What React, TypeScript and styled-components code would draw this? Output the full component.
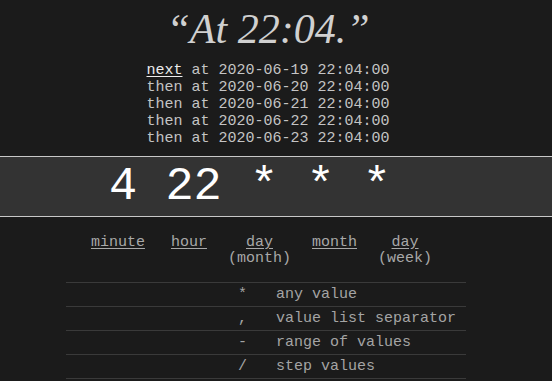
import * as React from 'react'
import styled, { createGlobalStyle } from 'styled-components'

const GlobalStyle = createGlobalStyle`
  html, body {
    margin: 0;
    padding: 0;
    background: #1b1b1b;
  }
  body {
    font-family: 'Liberation Mono', 'Courier New', monospace;
    color: #c4c4c4;
  }
`

const Page = styled.div`
  display: flex;
  flex-direction: column;
  align-items: center;
  height: 381px;
  overflow: hidden;
`

const Centered = styled.div`
  display: flex;
  flex-direction: column;
  align-items: center;
  align-self: stretch;
  padding-right: 16px;
`

const Title = styled.div`
  font-family: 'Liberation Serif', 'Times New Roman', serif;
  font-style: italic;
  font-size: 42px;
  line-height: 48px;
  color: #d0d0d0;
  margin-top: 5px;
`

const NextList = styled.div`
  margin-top: 9px;
  font-size: 15px;
  line-height: 17px;
`

const NextRow = styled.div`
  white-space: pre;
`

const NextLink = styled.span`
  color: #ececec;
  text-decoration: underline;
  text-underline-offset: 2px;
`

const CronBand = styled.div`
  align-self: stretch;
  margin-top: 9px;
  height: 59px;
  background: #333333;
  border-top: 1px solid #c8c8c8;
  border-bottom: 1px solid #c8c8c8;
  display: flex;
  align-items: center;
  justify-content: center;
  padding-right: 52px;
  font-size: 47px;
  color: #ffffff;
  white-space: pre;
`

const Fields = styled.div`
  display: flex;
  gap: 21px;
  margin-top: 18px;
  margin-right: 13px;
  font-size: 15px;
  line-height: 16px;
`

const Field = styled.div<{ $wide?: boolean }>`
  display: flex;
  flex-direction: column;
  align-items: center;
  color: #a8a8a8;
  margin-right: ${(p) => (p.$wide ? '5px' : '0')};
`

const FieldName = styled.span`
  text-decoration: underline;
  text-underline-offset: 2px;
`

const Legend = styled.div`
  width: 400px;
  margin-top: 15px;
  margin-right: 4px;
  border-top: 1px solid #3a3a3a;
  font-size: 15px;
  color: #a4a4a4;
`

const LegendRow = styled.div`
  display: grid;
  grid-template-columns: 181px 1fr;
  column-gap: 29px;
  height: 23px;
  align-items: center;
  border-bottom: 1px solid #3a3a3a;
`

const Symbol = styled.span`
  text-align: right;
`

const runs = ['2020-06-19', '2020-06-20', '2020-06-21', '2020-06-22', '2020-06-23']

const fields = [
  { name: 'minute' },
  { name: 'hour' },
  { name: 'day', sub: '(month)' },
  { name: 'month' },
  { name: 'day', sub: '(week)' }
]

const legend = [
  { sym: '*', text: 'any value' },
  { sym: ',', text: 'value list separator' },
  { sym: '-', text: 'range of values' },
  { sym: '/', text: 'step values' }
]

const App = () => {
  return (
    <>
      <GlobalStyle />
      <Page>
        <Centered>
          <Title>“At 22:04.”</Title>
          <NextList>
            {runs.map((date, i) => (
              <NextRow key={date}>
                {i === 0 ? <NextLink>next</NextLink> : 'then'} at {date} 22:04:00
              </NextRow>
            ))}
          </NextList>
        </Centered>
        <CronBand>4 22 * * *</CronBand>
        <Centered>
          <Fields>
            {fields.map((f, i) => (
              <Field key={i} $wide={i === 0}>
                <FieldName>{f.name}</FieldName>
                {f.sub && <span>{f.sub}</span>}
              </Field>
            ))}
          </Fields>
          <Legend>
            {legend.map((row) => (
              <LegendRow key={row.sym}>
                <Symbol>{row.sym}</Symbol>
                <span>{row.text}</span>
              </LegendRow>
            ))}
          </Legend>
        </Centered>
      </Page>
    </>
  )
}

export default App
